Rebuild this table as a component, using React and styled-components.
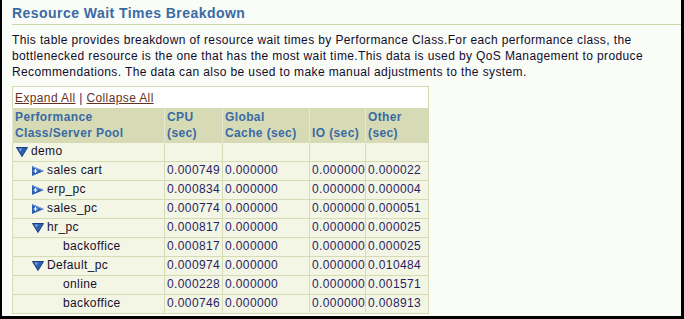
import React from "react";
import styled, { createGlobalStyle } from "styled-components";

const GlobalStyle = createGlobalStyle`
  html, body {
    margin: 0;
    padding: 0;
    background: #000;
  }
  body {
    font-family: "Liberation Sans", Arial, sans-serif;
    font-size: 12px;
    letter-spacing: 0.38px;
  }
`;

const Frame = styled.div`
  width: 684px;
  height: 319px;
  box-sizing: border-box;
  border-left: 2px solid #000;
  border-right: 3px solid #000;
  border-bottom: 3px solid #000;
  background: #fafcf7;
  padding: 5px 0 0 10px;
  overflow: hidden;
`;

const Title = styled.h1`
  margin: 0;
  padding: 0 0 3px 0;
  font-size: 14px;
  line-height: 16px;
  font-weight: bold;
  letter-spacing: 0.45px;
  color: #3a6aa4;
  border-bottom: 1px solid #cdd6a9;
`;

const Intro = styled.p`
  margin: 7px 0 6px 0;
  line-height: 16px;
  color: #120c2e;
  white-space: nowrap;
`;

const Table = styled.table`
  border-collapse: collapse;
  table-layout: fixed;
  width: 417px;
  border: 1px solid #d3dab0;
`;

const ToolRow = styled.tr`
  background: #ffffff;
  height: 21px;
`;

const ToolCell = styled.td`
  padding: 2px 2px 1px 2px;
  line-height: 16px;
  color: #1c2a6a;
`;

const Link = styled.a`
  color: #663322;
  text-decoration: underline;
  cursor: pointer;
`;

const HeadCell = styled.th`
  background: #d6dbb6;
  color: #3a6aa4;
  font-weight: bold;
  text-align: left;
  vertical-align: bottom;
  padding: 1px 2px 1px 2px;
  line-height: 16px;
  border-left: 1px solid #e6e9cf;
`;

const Row = styled.tr`
  background: #f3f5e5;
  height: 19px;
`;

const Cell = styled.td`
  border: 1px solid #d6dbb6;
  padding: 0 2px;
  line-height: 17px;
  white-space: nowrap;
  color: ${(p) => (p.num ? "#2a1f62" : "#14102e")};
`;

const NameWrap = styled.div`
  display: flex;
  align-items: center;
  padding-left: ${(p) => p.level * 16 + 1}px;
`;

const IconSlot = styled.span`
  display: inline-flex;
  width: 12px;
  height: 10px;
  margin-right: 3px;
`;

const Expanded = () => (
  <svg width="12" height="10" viewBox="0 0 12 10">
    <path d="M0.5 0.5 H11.5 L6 9.5 Z" fill="#2d5fb0" stroke="#1a3f86" strokeWidth="1" />
    <path d="M2.5 1.5 H6 L4.5 4.5 Z" fill="#7fa6e0" />
  </svg>
);

const Collapsed = () => (
  <svg width="12" height="10" viewBox="0 0 12 10">
    <path d="M0 0 L12 5 L0 10 Z" fill="#2d5fb0" />
    <path d="M0.5 0.8 L11 5" stroke="#7fa6e0" strokeWidth="1" />
    <path d="M1.5 5 H5.5 M3.5 3 V7" stroke="#ffffff" strokeWidth="1.2" />
  </svg>
);

const rows = [
  { name: "demo", level: 0, icon: "open" },
  { name: "sales cart", level: 1, icon: "closed", v: ["0.000749", "0.000000", "0.000000", "0.000022"] },
  { name: "erp_pc", level: 1, icon: "closed", v: ["0.000834", "0.000000", "0.000000", "0.000004"] },
  { name: "sales_pc", level: 1, icon: "closed", v: ["0.000774", "0.000000", "0.000000", "0.000051"] },
  { name: "hr_pc", level: 1, icon: "open", v: ["0.000817", "0.000000", "0.000000", "0.000025"] },
  { name: "backoffice", level: 2, v: ["0.000817", "0.000000", "0.000000", "0.000025"] },
  { name: "Default_pc", level: 1, icon: "open", v: ["0.000974", "0.000000", "0.000000", "0.010484"] },
  { name: "online", level: 2, v: ["0.000228", "0.000000", "0.000000", "0.001571"] },
  { name: "backoffice", level: 2, v: ["0.000746", "0.000000", "0.000000", "0.008913"] },
];

const App = () => (
  <>
    <GlobalStyle />
    <Frame>
      <Title>Resource Wait Times Breakdown</Title>
      <Intro>
        This table provides breakdown of resource wait times by Performance Class.For each performance class, the
        <br />
        bottlenecked resource is the one that has the most wait time.This data is used by QoS Management to produce
        <br />
        Recommendations. The data can also be used to make manual adjustments to the system.
      </Intro>
      <Table>
        <colgroup>
          <col style={{ width: 152 }} />
          <col style={{ width: 58 }} />
          <col style={{ width: 87 }} />
          <col style={{ width: 56 }} />
          <col style={{ width: 63 }} />
        </colgroup>
        <tbody>
          <ToolRow>
            <ToolCell colSpan={5}>
              <Link>Expand All</Link> | <Link>Collapse All</Link>
            </ToolCell>
          </ToolRow>
          <tr>
            <HeadCell>
              Performance
              <br />
              Class/Server Pool
            </HeadCell>
            <HeadCell>
              CPU
              <br />
              (sec)
            </HeadCell>
            <HeadCell>
              Global
              <br />
              Cache (sec)
            </HeadCell>
            <HeadCell>IO (sec)</HeadCell>
            <HeadCell>
              Other
              <br />
              (sec)
            </HeadCell>
          </tr>
          {rows.map((r, i) => (
            <Row key={i}>
              <Cell>
                <NameWrap level={r.level}>
                  <IconSlot>
                    {r.icon === "open" && <Expanded />}
                    {r.icon === "closed" && <Collapsed />}
                  </IconSlot>
                  {r.name}
                </NameWrap>
              </Cell>
              {(r.v || ["", "", "", ""]).map((x, j) => (
                <Cell key={j} num>
                  {x}
                </Cell>
              ))}
            </Row>
          ))}
        </tbody>
      </Table>
    </Frame>
  </>
);

export default App;
